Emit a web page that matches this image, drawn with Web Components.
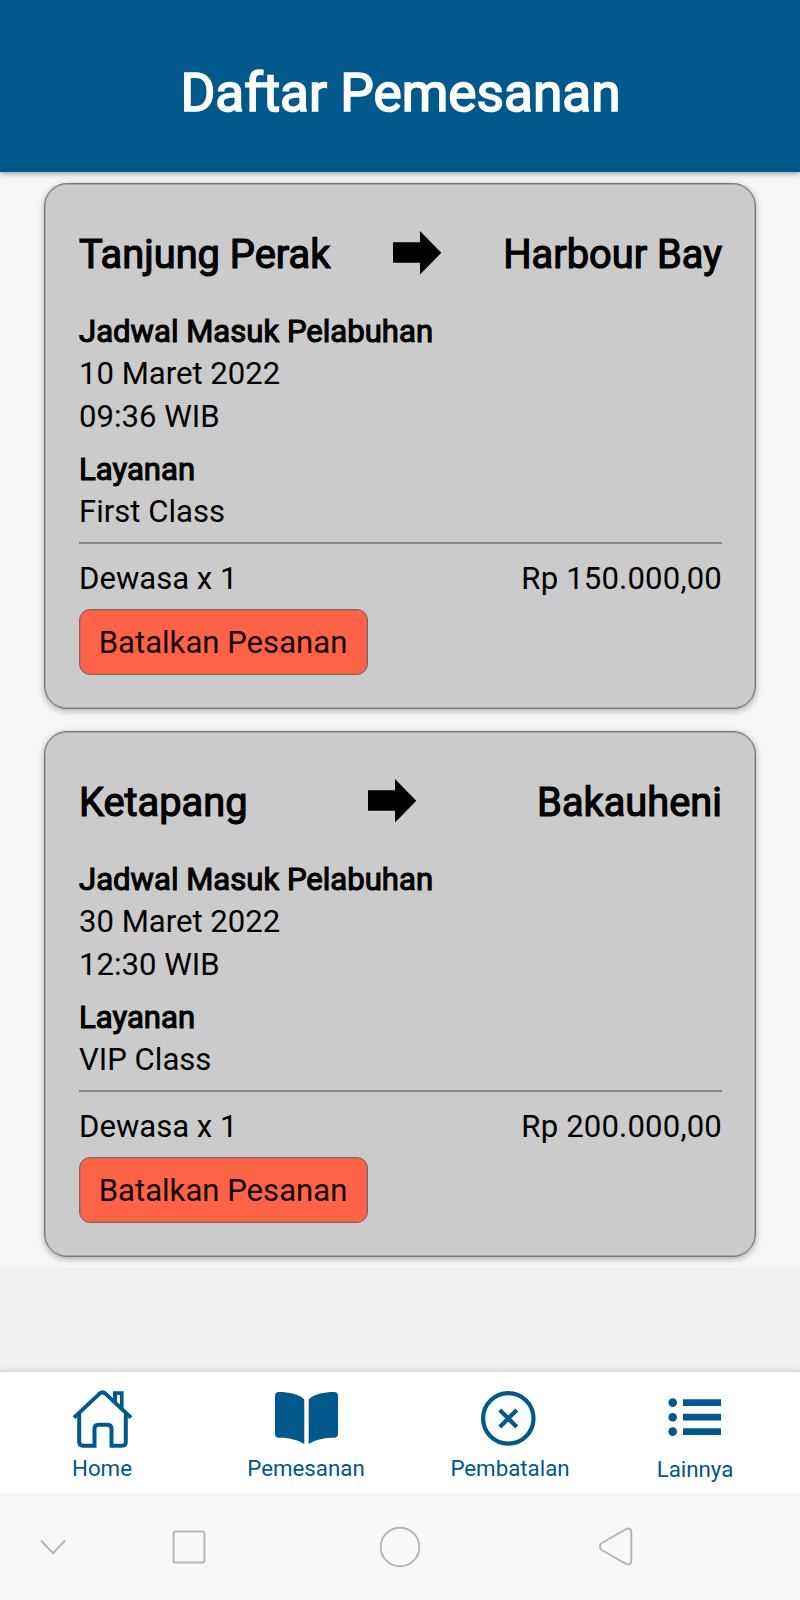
<!DOCTYPE html>
<html lang="id">
<head>
<meta charset="utf-8">
<title>Daftar Pemesanan</title>
<style>
html,body{margin:0;padding:0}
body{width:800px;height:1600px;overflow:hidden;font-family:Roboto,"Liberation Sans",sans-serif;background:#f1f1f1}
</style>
</head>
<body>
<booking-app></booking-app>
<script>
const define = (name, html, setup) => {
  const tpl = document.createElement('template');
  tpl.innerHTML = html;
  customElements.define(name, class extends HTMLElement {
    constructor() {
      super();
      this.attachShadow({mode: 'open'}).appendChild(tpl.content.cloneNode(true));
    }
    connectedCallback() { if (setup) setup(this, this.shadowRoot); }
  });
};

define('app-header', `
<style>
:host{display:block;flex:none;height:172px;background:#00588b;color:#fff;position:relative;z-index:1;box-shadow:0 2px 5px rgba(0,0,0,.32);box-sizing:border-box;padding:59px 0 0 1px;text-align:center}
h1{margin:0;font-weight:400;font-size:53.2px;line-height:69px;-webkit-text-stroke:1.7px #fff;font-variant-ligatures:none}
</style>
<h1><slot></slot></h1>`);

define('arrow-icon', `
<style>:host{display:block;flex:none;width:48px;height:44px}svg{display:block}</style>
<svg width="48" height="44" viewBox="0 0 48 44"><path d="M0 11.3H27V0L48.3 21.8L27 43.5V31.7H0Z" fill="#000"/></svg>`);

define('cancel-button', `
<style>
:host{display:block;width:289px}
button{display:block;box-sizing:border-box;width:289px;height:66px;margin:0;padding:0;border:1px solid #85625c;border-radius:11px;background:#ff6347;box-shadow:inset 0 0 0 .5px #a5655a;color:#140300;font:400 31.1px/65px Roboto,sans-serif;text-align:center}
</style>
<button><slot></slot></button>`);

define('booking-card', `
<style>
:host{display:block;box-sizing:border-box;height:526px;border:1px solid #787878;border-radius:23px;background:#cbcbcb;padding:43px 33px 0 34px;color:#000;box-shadow:inset 0 0 0 .5px #888,0 2px 6px rgba(0,0,0,.3);font-size:31.1px;line-height:42.4px}
.route{display:flex;justify-content:space-between;align-items:flex-start;font-size:39.8px;line-height:56px;-webkit-text-stroke:1.2px #000}
arrow-icon{margin-top:4px}
.label{-webkit-text-stroke:1.1px #000}
.schedule{margin-top:28px}
.service{margin-top:10.5px}
hr{border:0;height:2px;background:#868686;margin:8px 0 14.5px}
.price{display:flex;justify-content:space-between}
.amount{letter-spacing:.17px}
cancel-button{margin:9px 0 0 -.5px}
</style>
<div class="route"><span><slot name="from"></slot></span><arrow-icon></arrow-icon><span><slot name="to"></slot></span></div>
<div class="schedule"><div class="label">Jadwal Masuk Pelabuhan</div><div><slot name="date"></slot></div><div><slot name="time"></slot></div></div>
<div class="service"><div class="label">Layanan</div><div><slot name="service"></slot></div></div>
<hr>
<div class="price"><span><slot name="passengers"></slot></span><span class="amount"><slot name="price"></slot></span></div>
<cancel-button>Batalkan Pesanan</cancel-button>`);

define('booking-list', `
<style>:host{display:flex;flex:none;flex-direction:column;gap:22px;box-sizing:border-box;height:1096px;padding:11px 44px 0;background:#f6f6f6;overflow:hidden}</style>
<slot></slot>`);

const icons = {
  home: `<path d="M2 27.6L27.6 3.6Q30.5 1 33.4 3.6L59 27.6" fill="none" stroke="currentColor" stroke-width="4"/><path d="M7.2 24V52Q7.2 55.7 11 55.7H22.5V38.7Q22.5 34.7 26.5 34.7H35.5Q39.5 34.7 39.5 38.7V55.7H50Q53.8 55.7 53.8 52V24" fill="none" stroke="currentColor" stroke-width="4"/><path d="M41 11V1.3H51.6V21L48 17.6V5H45V14.8Z" fill="currentColor"/>`,
  book: `<path d="M0 6Q0 2 4 2C14 2 24 4 29.3 9.5V54C22 49.5 13 47.8 4 47.8Q0 47.8 0 43.8ZM63 6Q63 2 59 2C49 2 39 4 33.7 9.5V54C41 49.5 50 47.8 59 47.8Q63 47.8 63 43.8Z" fill="currentColor"/>`,
  cancel: `<circle cx="28.3" cy="28.4" r="25.2" fill="none" stroke="currentColor" stroke-width="4.2"/><path d="M19.8 20L36.8 37M36.8 20L19.8 37" fill="none" stroke="currentColor" stroke-width="4.2"/>`,
  list: `<g fill="currentColor"><circle cx="7.7" cy="12.6" r="4.3"/><circle cx="7.7" cy="27.2" r="4.3"/><circle cx="7.7" cy="41.6" r="4.3"/><path d="M18 9.2H56V16H18ZM18 23.8H56V30.6H18ZM18 38.3H56V45.1H18Z"/></g>`
};
define('nav-item', `
<style>
:host{display:flex;flex-direction:column;align-items:center;width:204px;padding-top:18px;color:#00588b;font-size:22.3px;line-height:30px;box-sizing:border-box}
svg{display:block;height:60px;overflow:visible}
span{margin-top:2.5px}
:host([icon=list]){width:166px}
:host([icon=list]) span{margin-top:4px}
</style>
<svg></svg><span><slot></slot></span>`, (el, root) => {
  const k = el.getAttribute('icon'), w = {home: 61, book: 63, cancel: 60, list: 60}[k], s = root.querySelector('svg');
  s.setAttribute('viewBox', `0 0 ${w} 60`);
  s.setAttribute('width', w);
  s.innerHTML = icons[k];
});

define('tab-bar', `
<style>:host{display:flex;flex:none;height:122px;margin-top:auto;background:#fff;box-shadow:0 -1px 5px rgba(0,0,0,.13);border-top:1px solid #dadada;box-sizing:border-box}</style>
<slot></slot>`);

define('system-bar', `
<style>
:host{display:grid;flex:none;grid-template-columns:106px 166px 256px 174px;align-items:center;justify-items:center;height:107px;background:#f8f8f8;position:relative}
svg{display:block;fill:none;stroke:#b5b5b5;stroke-width:2}
</style>
<svg width="44" height="44" viewBox="0 0 44 44"><path d="M10 15.5L22 28.2L34 15.5"/></svg>
<svg width="44" height="44" viewBox="0 0 44 44"><rect x="6.5" y="6.5" width="31" height="31" rx="2"/></svg>
<svg width="44" height="44" viewBox="0 0 44 44"><circle cx="22" cy="22" r="19.3"/></svg>
<svg width="44" height="44" viewBox="0 0 44 44"><path d="M33 4.2C35.8 2.6 38.3 4 38.3 7V36C38.3 39 35.8 40.4 33 38.8L8.7 25C6.3 23.4 6.3 19.6 8.7 18Z"/></svg>`);

define('booking-app', `
<style>:host{display:flex;flex-direction:column;width:800px;height:1600px;background:#f1f1f1}</style>
<app-header>Daftar Pemesanan</app-header>
<booking-list>
<booking-card><span slot="from">Tanjung Perak</span><span slot="to">Harbour Bay</span><span slot="date">10 Maret 2022</span><span slot="time">09:36 WIB</span><span slot="service">First Class</span><span slot="passengers">Dewasa x 1</span><span slot="price">Rp 150.000,00</span></booking-card>
<booking-card><span slot="from">Ketapang</span><span slot="to">Bakauheni</span><span slot="date">30 Maret 2022</span><span slot="time">12:30 WIB</span><span slot="service">VIP Class</span><span slot="passengers">Dewasa x 1</span><span slot="price">Rp 200.000,00</span></booking-card>
</booking-list>
<tab-bar><nav-item icon="home">Home</nav-item><nav-item icon="book">Pemesanan</nav-item><nav-item icon="cancel">Pembatalan</nav-item><nav-item icon="list">Lainnya</nav-item></tab-bar>
<system-bar></system-bar>`);
</script>
</body>
</html>
